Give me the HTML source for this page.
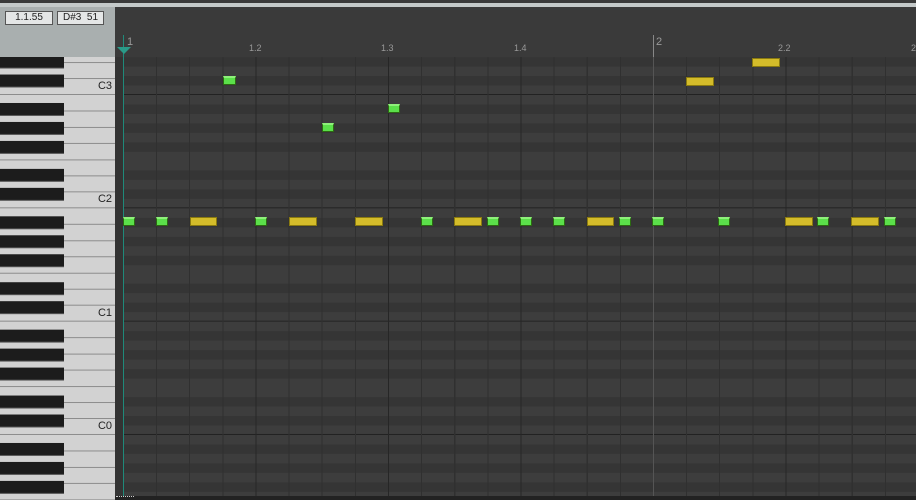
<!DOCTYPE html>
<html><head><meta charset="utf-8"><style>
body{margin:0;width:916px;height:500px;overflow:hidden;background:#3b3b3b;position:relative;font-family:"Liberation Sans",sans-serif}
div{position:absolute;box-sizing:border-box}
.box{background:#e4e6e6;border:1px solid #555;font-size:10px;color:#222;text-align:center;line-height:12px;height:14px;top:11px}
.rl{color:#999;font-size:9px}
.n{height:9px;border:1px solid #2c6a12;background:#5be04a;border-top:2px solid #8ef07a;top:217px;width:12px}
.y{height:9px;border:1px solid #8a7a10;background:#d4bc2a;top:217px;width:28px}
.lbl{font-size:11px;color:#222;left:70px;width:42px;text-align:right}
</style></head><body>
<div style="left:0;top:0;width:916px;height:3px;background:#3a3a3a"></div>
<div style="left:0;top:3px;width:916px;height:4px;background:#c4c9c9"></div>
<div style="left:0;top:7px;width:115px;height:493px;background:#a9afaf"></div>
<div class="box" style="left:5px;width:48px">1.1.55</div>
<div class="box" style="left:57px;width:47px">D#3&nbsp; 51</div>
<div style="left:115px;top:7px;width:801px;height:50px;background:#3a3a3a"></div>

<div style="left:115px;top:57px;width:801px;height:439px;
background-image:linear-gradient(to bottom,#3d3d3d 0 9.44px,#353535 9.44px 18.89px,#3d3d3d 18.89px 28.33px,#353535 28.33px 37.78px,#3d3d3d 37.78px 47.22px,#353535 47.22px 56.67px,#3d3d3d 56.67px 75.56px,#353535 75.56px 85px,#3d3d3d 85px 94.44px,#353535 94.44px 103.89px,#3d3d3d 103.89px 112.3px,#222 112.3px 113.33px);
background-size:801px 113.333px;background-position:0 38px"></div>
<div style="left:123px;top:57px;width:793px;height:439px;background-image:repeating-linear-gradient(to right,#303030 0 1px,transparent 1px 33.125px)"></div>
<div style="left:123px;top:57px;width:793px;height:439px;background-image:repeating-linear-gradient(to right,#262626 0 1px,transparent 1px 132.5px)"></div>
<div style="left:653px;top:35px;width:1px;height:22px;background:#888"></div>
<div style="left:653px;top:57px;width:1px;height:439px;background:#555"></div>

<div style="left:0;top:57px;width:115px;height:443px;background-color:#d2d2d2;
background-image:linear-gradient(to bottom,transparent 0 15.7px,#8c8c8c 15.7px 16.7px,transparent 16.7px 31.9px,#8c8c8c 31.9px 32.9px,transparent 32.9px 48.1px,#8c8c8c 48.1px 49.1px,transparent 49.1px 64.3px,#8c8c8c 64.3px 65.3px,transparent 65.3px 80.5px,#8c8c8c 80.5px 81.5px,transparent 81.5px 96.6px,#8c8c8c 96.6px 97.6px,transparent 97.6px 112.3px,#8c8c8c 112.3px 113.33px);background-size:115px 113.333px;background-position:0 38px"></div>
<div style="left:0;top:57px;width:64px;height:443px;
background-image:linear-gradient(to bottom,transparent 0 8px,#1c1c1c 8px 20px,#555 20px 21px,transparent 21px 27px,#1c1c1c 27px 39px,#555 39px 40px,transparent 40px 46px,#1c1c1c 46px 58px,#555 58px 59px,transparent 59px 74px,#1c1c1c 74px 86px,#555 86px 87px,transparent 87px 93px,#1c1c1c 93px 105px,#555 105px 106px,transparent 106px);background-size:64px 113.333px;background-position:0 38px"></div>
<div class="lbl" style="top:80px">C3</div>
<div class="lbl" style="top:193px">C2</div>
<div class="lbl" style="top:307px">C1</div>
<div class="lbl" style="top:420px">C0</div>

<div style="left:115px;top:57px;width:8px;height:439px;background:#333"></div>
<div style="left:123px;top:35px;width:1px;height:461px;background:#1f8a7a"></div>
<div style="left:117px;top:47px;width:0;height:0;border-left:7px solid transparent;border-right:7px solid transparent;border-top:7px solid #2a9a88"></div>
<div style="left:115px;top:496px;width:801px;height:4px;background:#222"></div>
<div style="left:116px;top:496px;width:18px;height:2px;border-top:1px dotted #ccc"></div>
<div class="rl" style="left:127px;top:36px;font-size:11px">1</div>
<div class="rl" style="left:249px;top:43px">1.2</div>
<div class="rl" style="left:381px;top:43px">1.3</div>
<div class="rl" style="left:514px;top:43px">1.4</div>
<div class="rl" style="left:656px;top:36px;font-size:11px">2</div>
<div class="rl" style="left:778px;top:43px">2.2</div>
<div class="rl" style="left:911px;top:43px">2</div>

<div class="n" style="left:223px;top:76px;width:13px"></div>
<div class="y" style="left:752px;top:58px"></div>
<div class="y" style="left:686px;top:77px"></div>
<div class="n" style="left:388px;top:104px"></div>
<div class="n" style="left:322px;top:123px"></div>
<div class="n" style="left:123px"></div>
<div class="n" style="left:156px"></div>
<div class="y" style="left:190px;width:27px"></div>
<div class="n" style="left:255px"></div>
<div class="y" style="left:289px"></div>
<div class="y" style="left:355px"></div>
<div class="n" style="left:421px"></div>
<div class="y" style="left:454px"></div>
<div class="n" style="left:487px"></div>
<div class="n" style="left:520px"></div>
<div class="n" style="left:553px"></div>
<div class="y" style="left:587px;width:27px"></div>
<div class="n" style="left:619px"></div>
<div class="n" style="left:652px"></div>
<div class="n" style="left:718px"></div>
<div class="y" style="left:785px"></div>
<div class="n" style="left:817px"></div>
<div class="y" style="left:851px"></div>
<div class="n" style="left:884px"></div>
</body></html>
